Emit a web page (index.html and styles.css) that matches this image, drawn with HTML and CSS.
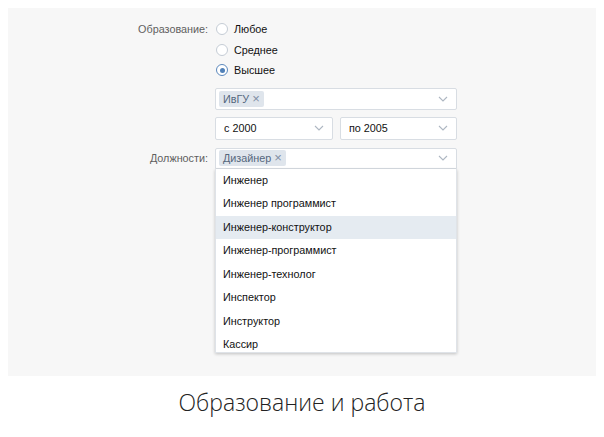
FILE: index.html
```html
<!DOCTYPE html>
<html lang="ru">
<head>
<meta charset="utf-8">
<link rel="stylesheet" href="styles.css">
</head>
<body>
<div class="panel">
  <div class="form">
    <div class="label label-edu">Образование:</div>
    <div class="controls">
      <div class="radios">
        <div class="radio"><span class="circle"></span>Любое</div>
        <div class="radio"><span class="circle"></span>Среднее</div>
        <div class="radio"><span class="circle checked"></span>Высшее</div>
      </div>
      <div class="select select-uni">
        <span class="chip">ИвГУ <span class="x">×</span></span>
        <svg class="chev" width="10" height="6" viewBox="0 0 10 6"><path d="M1 1l4 4 4-4" fill="none" stroke="#aeb7c2" stroke-width="1.1"/></svg>
      </div>
      <div class="years">
        <div class="select"><span class="val">с 2000</span><svg class="chev" width="10" height="6" viewBox="0 0 10 6"><path d="M1 1l4 4 4-4" fill="none" stroke="#aeb7c2" stroke-width="1.1"/></svg></div>
        <div class="select"><span class="val">по 2005</span><svg class="chev" width="10" height="6" viewBox="0 0 10 6"><path d="M1 1l4 4 4-4" fill="none" stroke="#aeb7c2" stroke-width="1.1"/></svg></div>
      </div>
    </div>
    <div class="label label-job">Должности:</div>
    <div class="controls">
      <div class="select select-job">
        <span class="chip">Дизайнер <span class="x">×</span></span>
        <svg class="chev" width="10" height="6" viewBox="0 0 10 6"><path d="M1 1l4 4 4-4" fill="none" stroke="#aeb7c2" stroke-width="1.1"/></svg>
      </div>
      <div class="dropdown">
        <div class="item">Инженер</div>
        <div class="item">Инженер программист</div>
        <div class="item active">Инженер-конструктор</div>
        <div class="item">Инженер-программист</div>
        <div class="item">Инженер-технолог</div>
        <div class="item">Инспектор</div>
        <div class="item">Инструктор</div>
        <div class="item">Кассир</div>
      </div>
    </div>
  </div>
</div>
<div class="caption">Образование и работа</div>
</body>
</html>
```

FILE: styles.css
```css
html, body { margin: 0; padding: 0; background: #fff; }
body {
  padding: 8px;
  font-family: "Liberation Sans", Arial, sans-serif;
  font-size: 10.8px;
  color: #222;
}
.panel {
  background: #f7f7f7;
  width: 588px;
  height: 368px;
  box-sizing: border-box;
  padding-top: 11px;
}
.form {
  display: grid;
  grid-template-columns: 200px 242px;
  column-gap: 7px;
  align-items: start;
}
.label {
  text-align: right;
  color: #5f5f5f;
  line-height: 20px;
}
.label-job { margin-top: 8px; line-height: 21px; }
.controls { display: flex; flex-direction: column; }
.radios { display: flex; flex-direction: column; }
.radio {
  display: flex;
  align-items: center;
  height: 20.5px;
  color: #111;
}
.circle {
  width: 10px;
  height: 10px;
  border: 1px solid #c5ccd5;
  border-radius: 50%;
  background: #fff;
  margin-left: 1px;
  margin-right: 6px;
  box-sizing: content-box;
  position: relative;
}
.circle.checked { border-color: #5b88bd; }
.circle.checked::after {
  content: "";
  position: absolute;
  left: 2.5px; top: 2.5px;
  width: 5px; height: 5px;
  border-radius: 50%;
  background: #5181b8;
}
.select {
  background: #fff;
  border: 1px solid #d8dde3;
  border-radius: 2px;
  box-sizing: border-box;
  height: 22px;
  display: flex;
  align-items: center;
  padding: 0 8px 0 3px;
  color: #111;
}
.select .chev { margin-left: auto; }
.select-uni { margin-top: 7px; }
.years {
  display: grid;
  grid-template-columns: 118px 117px;
  column-gap: 7px;
  margin-top: 7px;
}
.years .select { height: 23px; padding-left: 8px; }
.chip {
  background: #dfe5ec;
  color: #55677d;
  border-radius: 2px;
  height: 16px;
  line-height: 16px;
  padding: 0 4px 0 4px;
  display: inline-flex;
  align-items: center;
}
.chip .x { color: #7f8fa4; font-size: 13px; margin-left: 3px; }
.select-job {
  margin-top: 8px;
  height: 21px;
  border-radius: 2px 2px 0 0;
}
.dropdown {
  background: #fff;
  height: 184px;
  overflow: hidden;
  box-shadow: 0 1px 3px rgba(0,0,0,0.22);
  border: 1px solid #dfe3e8;
  border-top: none;
  box-sizing: border-box;
}
.item {
  height: 23.5px;
  line-height: 23.5px;
  padding-left: 7px;
  color: #111;
}
.item.active { background: #e5ebf1; }
.caption {
  text-align: center;
  font-family: "Open Sans", sans-serif;
  font-weight: 300;
  font-size: 23px;
  color: #222;
  margin-top: 10px;
}
```
